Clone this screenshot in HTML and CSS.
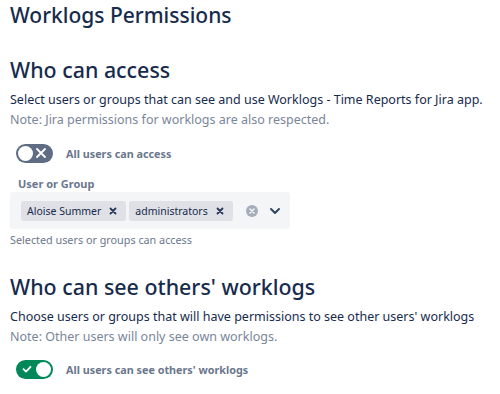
FILE: index.html
```html
<!DOCTYPE html>
<html>
<head>
<meta charset="utf-8">
<link rel="stylesheet" href="styles.css">
</head>
<body>
<div class="page">
  <h1 class="title">Worklogs Permissions</h1>

  <section class="section">
    <h2 class="heading">Who can access</h2>
    <p class="desc">Select users or groups that can see and use Worklogs - Time Reports for Jira app.</p>
    <p class="note">Note: Jira permissions for worklogs are also respected.</p>

    <div class="toggle-row">
      <span class="toggle off">
        <span class="knob"></span>
        <svg class="toggle-icon" width="12" height="12" viewBox="0 0 12 12"><path d="M2 2 L10 10 M10 2 L2 10" stroke="#fff" stroke-width="1.8" stroke-linecap="round"/></svg>
      </span>
      <span class="toggle-label">All users can access</span>
    </div>

    <div class="field">
      <div class="field-label">User or Group</div>
      <div class="select">
        <div class="tags">
          <span class="tag">Aloise Summer <svg class="tag-x" width="8" height="8" viewBox="0 0 8 8"><path d="M1.5 1.5 L6.5 6.5 M6.5 1.5 L1.5 6.5" stroke="#253858" stroke-width="1.8" stroke-linecap="round"/></svg></span>
          <span class="tag">administrators <svg class="tag-x" width="8" height="8" viewBox="0 0 8 8"><path d="M1.5 1.5 L6.5 6.5 M6.5 1.5 L1.5 6.5" stroke="#253858" stroke-width="1.8" stroke-linecap="round"/></svg></span>
        </div>
        <div class="indicators">
          <svg width="12" height="12" viewBox="0 0 12 12"><circle cx="6" cy="6" r="6" fill="#a5adba"/><path d="M4 4 L8 8 M8 4 L4 8" stroke="#f4f5f7" stroke-width="1.6" stroke-linecap="round"/></svg>
          <svg width="14" height="14" viewBox="0 0 14 14"><path d="M3 5 L7 9 L11 5" fill="none" stroke="#344563" stroke-width="2" stroke-linecap="round" stroke-linejoin="round"/></svg>
        </div>
      </div>
      <div class="helper">Selected users or groups can access</div>
    </div>
  </section>

  <section class="section second">
    <h2 class="heading">Who can see others' worklogs</h2>
    <p class="desc">Choose users or groups that will have permissions to see other users' worklogs</p>
    <p class="note">Note: Other users will only see own worklogs.</p>

    <div class="toggle-row last">
      <span class="toggle on">
        <svg class="toggle-icon" width="12" height="12" viewBox="0 0 12 12"><path d="M2.5 6.2 L5 8.6 L9.5 3.8" fill="none" stroke="#fff" stroke-width="1.8" stroke-linecap="round" stroke-linejoin="round"/></svg>
        <span class="knob"></span>
      </span>
      <span class="toggle-label">All users can see others' worklogs</span>
    </div>
  </section>
</div>
</body>
</html>
```

FILE: styles.css
```css
* { box-sizing: border-box; }
html, body { margin: 0; padding: 0; background: #fff; }
body {
  font-family: "Noto Sans", "Open Sans", sans-serif;
  color: #172b4d;
}
.page { padding: 0 10px; }
.title {
  margin: 0;
  padding-top: 1px;
  font-size: 21px;
  line-height: 28px;
  font-weight: 500;
  color: #172b4d;
}
.section { margin-top: 26px; }
.section.second { margin-top: 24px; }
.heading {
  margin: 0;
  font-size: 21.4px;
  line-height: 30px;
  font-weight: 500;
  color: #172b4d;
}
.desc {
  margin: 5px 0 0;
  font-size: 12.5px;
  line-height: 20px;
  color: #172b4d;
}
.note {
  margin: 0;
  font-size: 12.5px;
  line-height: 20px;
  color: #7a869a;
}
.toggle-row {
  display: flex;
  align-items: center;
  margin-top: 13px;
  padding-left: 6px;
  height: 20px;
}
.toggle-row.last { margin-top: 12px; }
.toggle {
  width: 37px;
  height: 19px;
  border-radius: 10px;
  display: flex;
  align-items: center;
  justify-content: space-between;
  padding: 0 2px;
}
.toggle.off { background: #5e6c84; }
.toggle.on { background: #00875a; padding: 0 2px 0 5px; }
.knob {
  width: 15px;
  height: 15px;
  border-radius: 50%;
  background: #fff;
}
.toggle.off .toggle-icon { margin-right: 4px; }
.toggle-label {
  margin-left: 13px;
  font-size: 10.8px;
  font-weight: 700;
  color: #6b778c;
}
.field { margin-top: 13px; }
.field-label {
  padding-left: 8px;
  font-size: 11px;
  font-weight: 700;
  color: #6b778c;
  line-height: 16px;
}
.select {
  margin-top: 0;
  width: 280px;
  height: 37px;
  background: #f4f5f7;
  border-radius: 3px;
  display: flex;
  align-items: center;
  justify-content: space-between;
  padding: 0 8px 0 11px;
}
.tags { display: flex; gap: 3px; }
.tag {
  display: flex;
  align-items: center;
  height: 20px;
  padding: 0 9px 0 6px;
  background: #dfe1e6;
  border-radius: 3px;
  font-size: 10.5px;
  color: #172b4d;
}
.tag-x { margin-left: 8px; }
.indicators { display: flex; align-items: center; gap: 10px; }
.helper {
  margin-top: 3px;
  font-size: 10.8px;
  line-height: 16px;
  color: #6b778c;
}
```
